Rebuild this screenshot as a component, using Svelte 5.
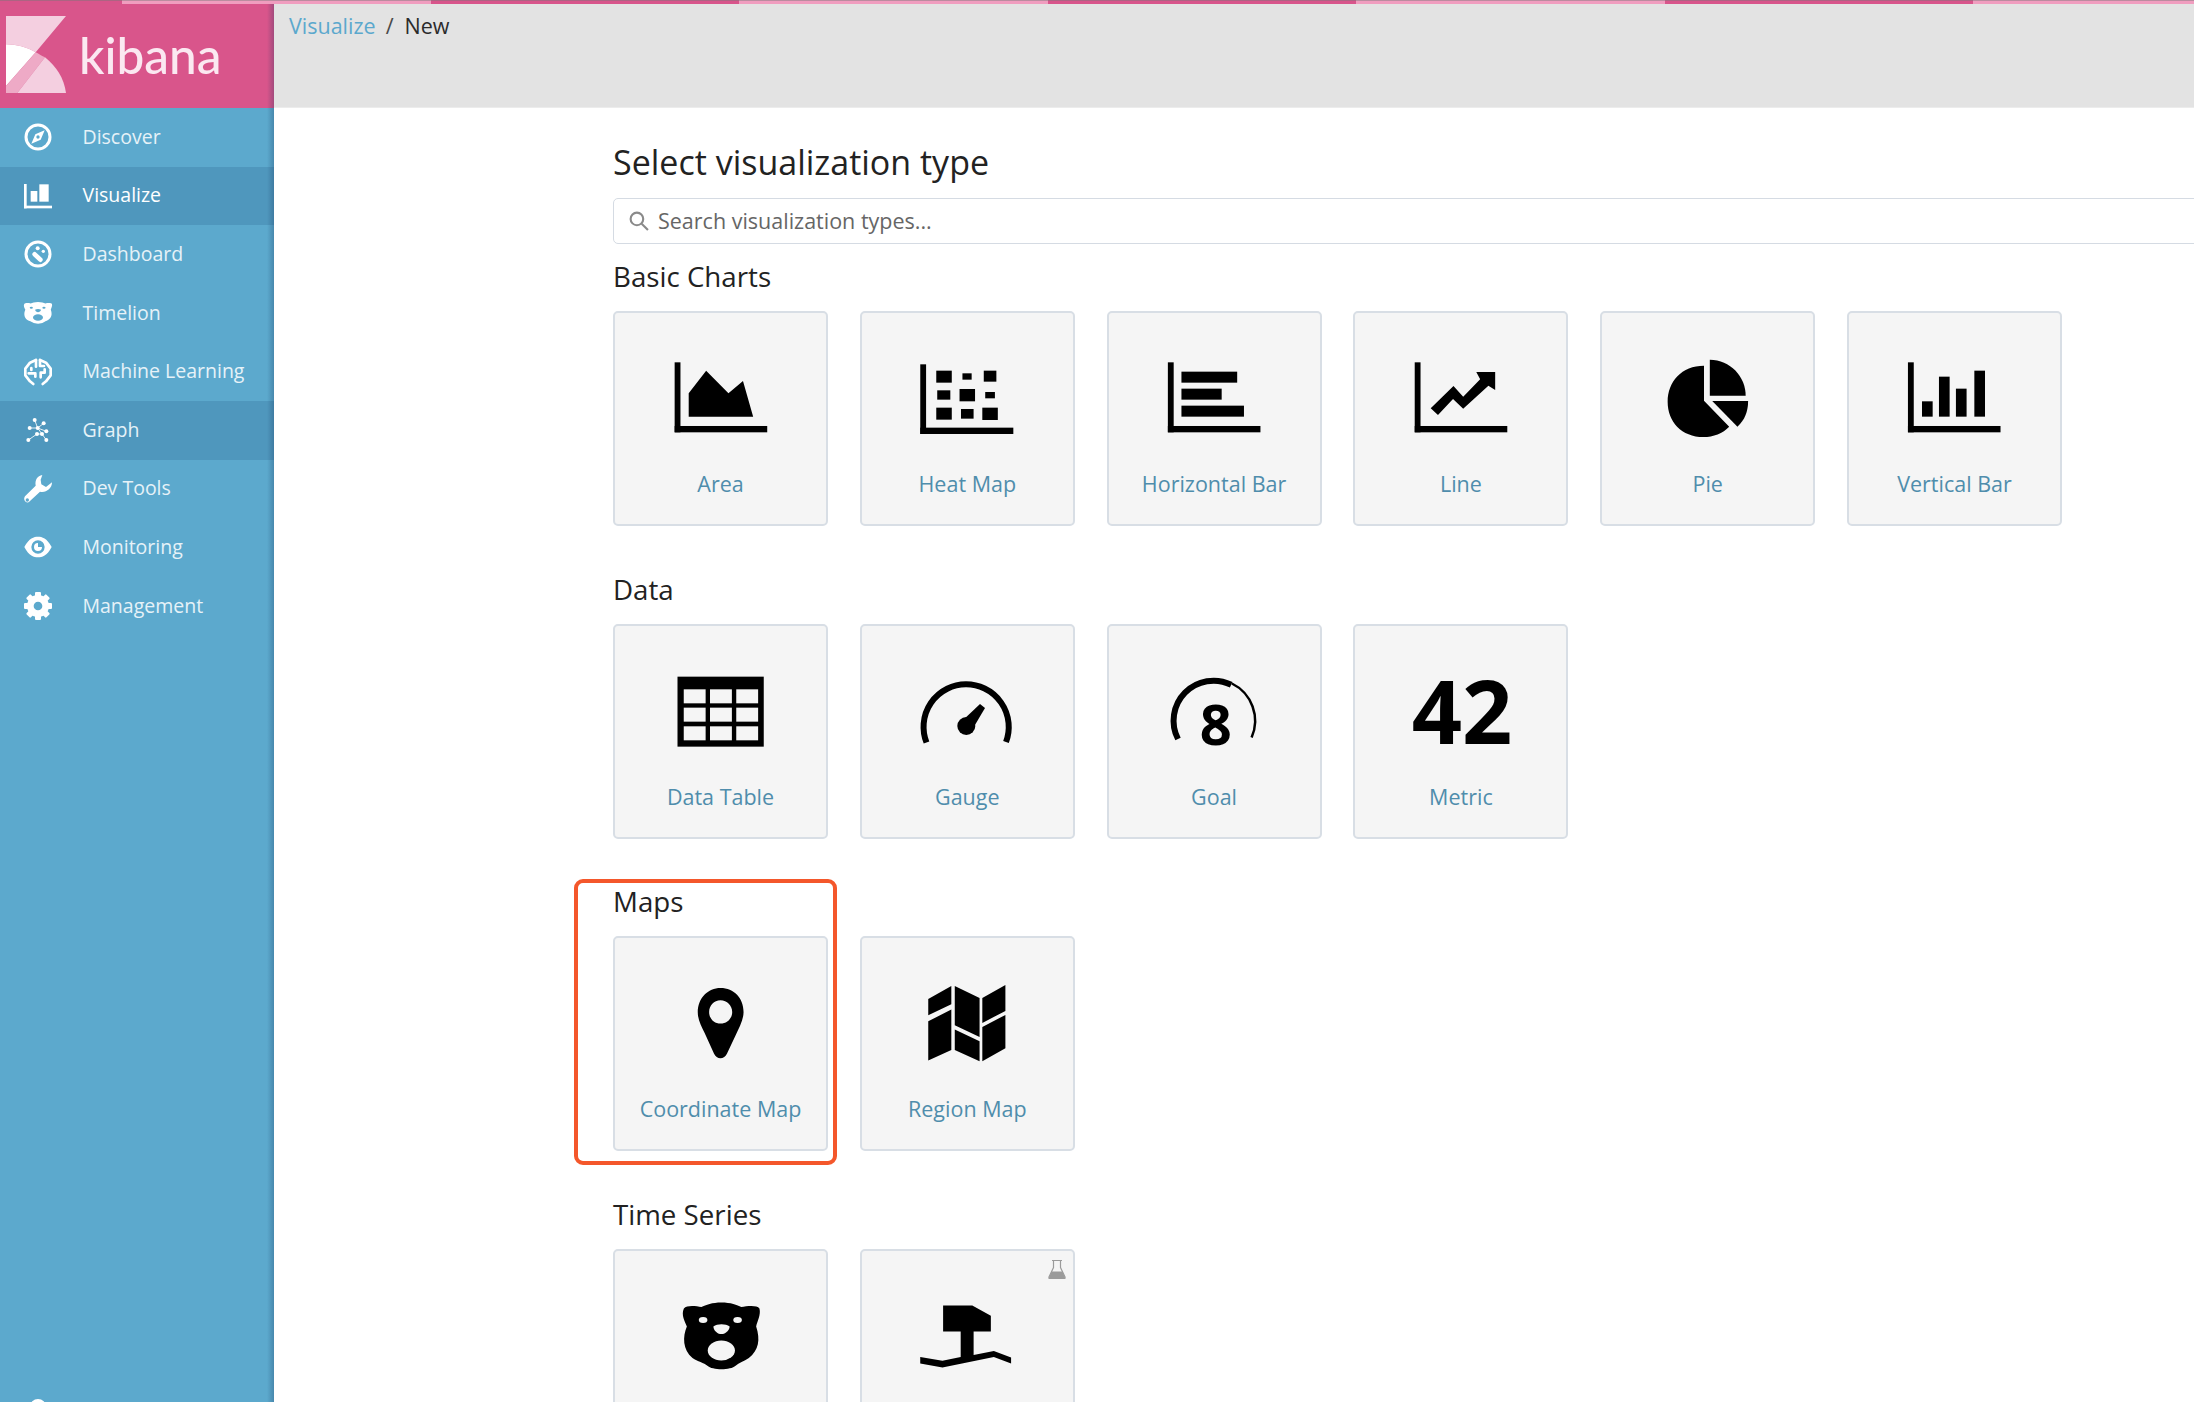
<script>
  const nav = [
    { label: 'Discover', icon: 'discover' },
    { label: 'Visualize', icon: 'visualize', on: true, bright: true },
    { label: 'Dashboard', icon: 'dashboard' },
    { label: 'Timelion', icon: 'timelion' },
    { label: 'Machine Learning', icon: 'ml' },
    { label: 'Graph', icon: 'graph', on: true },
    { label: 'Dev Tools', icon: 'wrench' },
    { label: 'Monitoring', icon: 'eye' },
    { label: 'Management', icon: 'gear' }
  ];
  const teeth = [0, 45, 90, 135, 180, 225, 270, 315];
</script>

{#snippet axes(x1, x2, xEnd, yTop, yBar, yEnd)}
  <rect x={x1} y={yTop} width={x2 - x1} height={yEnd - yTop} />
  <rect x={x1} y={yBar} width={xEnd - x1} height={yEnd - yBar} />
{/snippet}

{#snippet bearShape()}
  <path d="M422 338C450 338 470 345 482 352C500 348 530 345 537 356C542 375 530 395 527 410C540 450 535 480 505 505C490 515 475 520 465 528C450 542 395 542 380 528C370 520 350 515 335 505C305 480 305 440 318 410C312 395 300 375 309 356C318 345 345 348 362 352C375 345 395 338 422 338Z" />
  <ellipse class="hole" cx="367" cy="391" rx="13" ry="9" />
  <ellipse class="hole" cx="471" cy="391" rx="13" ry="9" />
  <path class="hole" d="M398 410C410 401 435 401 447 410C446 424 432 433 422 433C412 433 399 424 398 410Z" />
  <ellipse class="hole" cx="422" cy="482" rx="41" ry="30" />
{/snippet}

{#snippet card(label, icon, beta)}
  <div class="card">
    {#if beta}
      <svg class="flask" viewBox="0 0 18 19" aria-hidden="true">
        <path d="M4 .5H14M5.500 1V7.500L1 17Q.7 18.500 2 18.500H16Q17.300 18.500 17 17L12.500 7.500V1" fill="none" stroke="#9b9b9b" stroke-width="1.200" />
        <path d="M3.500 11.500H14.500L17.500 18.800H.5Z" fill="#9b9b9b" />
      </svg>
    {/if}
    <svg class="viz" viewBox="0 0 100 100" aria-hidden="true">{@render icon()}</svg>
    {#if label}
      <span class="label">{label}</span>
    {/if}
  </div>
{/snippet}

{#snippet area()}
  <g transform="translate(-71 -41) scale(.4847 .3333)">
    {@render axes(154, 166, 345, 187, 378, 397)}
    <path d="M183 280L219 212L265 280L295 243L316 350H183Z" />
  </g>
{/snippet}
{#snippet heat()}
  <g transform="translate(-317.600 -41) scale(.4847 .3333)">
    {@render axes(662, 674, 854, 193, 383, 402)}
    <rect x="695" y="212" width="32" height="36" /><rect x="749" y="220" width="19" height="19" /><rect x="793" y="212" width="26" height="33" />
    <rect x="697" y="271" width="27" height="28" /><rect x="743" y="267" width="32" height="37" /><rect x="796" y="276" width="20" height="19" />
    <rect x="695" y="323" width="32" height="36" /><rect x="746" y="327" width="26" height="29" /><rect x="790" y="323" width="32" height="37" />
  </g>
{/snippet}
{#snippet hbar()}
  <g transform="translate(-564.200 -41) scale(.4847 .3333)">
    {@render axes(1172, 1184, 1363, 187, 378, 397)}
    <rect x="1200" y="215" width="115" height="33" /><rect x="1200" y="266" width="83" height="33" /><rect x="1200" y="317" width="129" height="33" />
  </g>
{/snippet}
{#snippet line()}
  <g transform="translate(-90.800 -41) scale(.4847 .3333)">
    {@render axes(195, 207, 386, 187, 378, 397)}
    <path d="M228 325L275 258L295 290L330 238L322 216H361V270L347 257L295 326L274 297L243 345Z" />
  </g>
{/snippet}
{#snippet pie()}
  <g transform="translate(-337.400 -41) scale(.4847 .3333)">
    <path d="M791 197C745 197 716 245 716 305C716 365 745 411 790 411C810 411 830 400 843 380L791 302Z" />
    <path d="M803 179C845 179 877 230 877 287H803Z" />
    <path d="M808 303H882C882 335 875 360 860 380Z" />
  </g>
{/snippet}
{#snippet vbar()}
  <g transform="translate(-584 -41) scale(.4847 .3333)">
    {@render axes(1213, 1225, 1404, 187, 378, 397)}
    <rect x="1242" y="304" width="22" height="46" /><rect x="1277" y="230" width="22" height="120" /><rect x="1312" y="266" width="22" height="84" /><rect x="1350" y="212" width="22" height="138" />
  </g>
{/snippet}
{#snippet table()}
  <g transform="translate(-71 -34) scale(.625 .3333)">
    <rect x="124" y="170" width="138" height="210" />
    {#each [208, 263, 319] as y}
      {#each [134, 176, 218] as x}
        <rect class="hole" {x} {y} width="35" height="42" />
      {/each}
    {/each}
  </g>
{/snippet}
{#snippet gauge()}
  <path class="stroke" stroke-width="6" d="M9.500 88.500A42.600 42.600 0 1 1 89 88" />
  <circle cx="49.300" cy="72" r="9" />
  <path d="M44 68L63 50L68 54L55 76Z" />
{/snippet}
{#snippet goal()}
  <path class="stroke" stroke-width="6" d="M14 85A40 40 0 0 1 67.200 30.800" />
  <path class="stroke" stroke-width="2.500" d="M67.900 29.500A41.500 41.500 0 0 1 87.600 83.400" />
  <text class="num eight" x="51.700" y="91" text-anchor="middle">8</text>
{/snippet}
{#snippet metric()}
  <text class="num fortytwo" x="51" y="90" text-anchor="middle">42</text>
{/snippet}
{#snippet pin()}
  <g transform="translate(-111 -96.400) scale(.3444 .3333)">
    <path fill-rule="evenodd" d="M466 355C505 355 533 385 533 428C533 450 520 475 510 497L485 552C478 570 455 572 447 552L420 490C410 470 400 450 400 428C400 385 430 355 466 355ZM466 392C447 392 433 408 433 427C433 447 447 462 466 462C485 462 500 447 500 427C500 408 485 392 466 392Z" />
  </g>
{/snippet}
{#snippet region()}
  <g transform="translate(-357.600 -96.400) scale(.3444 .3333)">
    <path d="M1071 388L1138 349V404L1071 437ZM1071 455L1138 420V541L1071 573ZM1148 349L1220 385V502L1148 467ZM1148 480L1220 515V575L1148 541ZM1228 385L1295 346V424L1228 460ZM1228 472L1295 436V536L1228 575Z" />
  </g>
{/snippet}
{#snippet bear()}
  <g transform="translate(-89.600 -89.200) scale(.3316 .3333)">{@render bearShape()}</g>
{/snippet}
{#snippet hammer()}
  <g transform="translate(-336 -89.200) scale(.3316 .3333)">
    <path d="M1092 347H1180L1236 378V425H1184V496L1245 484L1297 503V521L1245 502L1090 533L1023 521V502L1090 513L1145 502V425H1092Z" />
  </g>
{/snippet}

<div class="page">
  <div class="progress"></div>

  <aside class="sidebar">
    <div class="brand">
      <svg class="logo" viewBox="0 0 60 77" aria-hidden="true">
        <path fill="#f4cfe0" d="M0 0H60L29.700 36.300C21 31 10 28.300 0 28.300Z" />
        <path fill="#fff" d="M0 28.300C10 28.300 21 31 29.700 36.300L0 70Z" />
        <path fill="#eeaac6" d="M29.700 36.300C33 38 36 40 39 41.300L11.300 77H0V70Z" />
        <path fill="#f4cfe0" d="M39 41.300C50 50 58 62 60 77H11.300Z" />
      </svg>
      <span class="word">kibana</span>
    </div>
    <nav>
      {#each nav as item}
        <div class="row" class:on={item.on} class:bright={item.bright}>
          <svg class="nav-icon" viewBox="0 0 84 84" aria-hidden="true">
            {#if item.icon === 'discover'}
              <circle class="ring" cx="42" cy="42" r="36" />
              <path fill-rule="evenodd" d="M62 22L50 50L22 62L34 34ZM42 37A5 5 0 1 0 42 47A5 5 0 1 0 42 37Z" />
            {:else if item.icon === 'visualize'}
              <rect x="0" y="6" width="8" height="73" /><rect x="0" y="71" width="84" height="8" />
              <rect x="20" y="27" width="20" height="32" /><rect x="46" y="7" width="28" height="52" />
            {:else if item.icon === 'dashboard'}
              <circle class="ring" cx="42" cy="42" r="36" />
              <circle cx="41" cy="25" r="6" /><circle cx="58" cy="34" r="5" />
              <path class="blob" d="M32 43L49 59" />
            {:else if item.icon === 'timelion'}
              <g transform="translate(42 42) scale(.365 .325) translate(-422 -440)">{@render bearShape()}</g>
            {:else if item.icon === 'ml'}
              <g class="lines">
                <path d="M36 6L18 14L4 32V52L18 70L28 78M48 6L66 14L80 32V52L66 70L56 78" />
                <path d="M36 6V26M48 6V24H60M22 30V36M20 46H34V56M62 34V44H50V58M14 46H20" />
              </g>
            {:else if item.icon === 'graph'}
              <g class="thin">
                <path d="M32 12L41 36M59 22L41 36M17 36H41L54 54L39 54L13 72M41 36L67 46M54 54L67 72" />
              </g>
              {#each [[32,12],[17,36],[59,22],[41,36],[67,46],[39,54],[13,72],[67,72],[54,54]] as p}
                <circle cx={p[0]} cy={p[1]} r="6" />
              {/each}
            {:else if item.icon === 'wrench'}
              <path fill-rule="evenodd" d="M55 0C40 3 32 15 35 32L3 64C-3 72 3 85 14 82L48 50C65 54 84 42 84 22L66 36L52 28L50 14ZM10 70A5 5 0 1 0 10 80A5 5 0 1 0 10 70Z" />
            {:else if item.icon === 'eye'}
              <path fill-rule="evenodd" d="M1 42C15 15 30 11 42 11C54 11 69 15 83 42C69 69 54 73 42 73C30 73 15 69 1 42ZM42 22A20 20 0 1 0 42 62A20 20 0 1 0 42 22Z" />
              <path d="M42 30A12 12 0 1 0 54 42L42 42Z" />
            {:else}
              <circle class="gearbody" cx="42" cy="42" r="23" />
              {#each teeth as t}
                <rect x="33" y="0" width="18" height="20" rx="3" transform="rotate({t} 42 42)" />
              {/each}
            {/if}
          </svg>
          <span class="nav-text">{item.label}</span>
        </div>
      {/each}
    </nav>
    <div class="collapse"></div>
  </aside>

  <main>
    <header class="topbar">
      <a class="crumb" href="#/">Visualize</a><span class="sep">/</span><span class="cur">New</span>
    </header>

    <div class="content">
      <h1>Select visualization type</h1>
      <div class="search">
        <svg viewBox="0 0 20 20" aria-hidden="true"><circle cx="8.500" cy="8.500" r="6" /><path d="M13 13L19 19" /></svg>
        <span>Search visualization types...</span>
      </div>

      <section>
        <h2>Basic Charts</h2>
        <div class="cards">
          {@render card('Area', area)}
          {@render card('Heat Map', heat)}
          {@render card('Horizontal Bar', hbar)}
          {@render card('Line', line)}
          {@render card('Pie', pie)}
          {@render card('Vertical Bar', vbar)}
        </div>
      </section>

      <section>
        <h2>Data</h2>
        <div class="cards">
          {@render card('Data Table', table)}
          {@render card('Gauge', gauge)}
          {@render card('Goal', goal)}
          {@render card('Metric', metric)}
        </div>
      </section>

      <section class="maps">
        <div class="callout"></div>
        <h2>Maps</h2>
        <div class="cards">
          {@render card('Coordinate Map', pin)}
          {@render card('Region Map', region)}
        </div>
      </section>

      <section>
        <h2>Time Series</h2>
        <div class="cards">
          {@render card('', bear)}
          {@render card('', hammer, true)}
        </div>
      </section>
    </div>
  </main>
</div>

<style>
  :global(body) {
    margin: 0;
    background: #fff;
    font-family: "Open Sans", "Liberation Sans", sans-serif;
  }
  .page {
    position: relative;
    display: flex;
    width: 2194px;
    height: 1402px;
    overflow: hidden;
  }
  .progress {
    position: absolute;
    z-index: 3;
    top: 0;
    left: 0;
    right: 0;
    height: 4px;
    background: repeating-linear-gradient(90deg, #d8558b 0 308.500px, #f09dbf 308.500px 617px);
    background-position: 431px 0;
    background-size: 617px 100%;
    border-top: 1px solid rgba(120, 120, 120, .45);
    box-sizing: border-box;
  }
  .sidebar {
    position: relative;
    flex: 0 0 274px;
    background: #5ca9cd;
    overflow: hidden;
  }
  .sidebar::after {
    content: "";
    position: absolute;
    top: 0;
    bottom: 0;
    right: 0;
    width: 7px;
    background: linear-gradient(90deg, rgba(20, 50, 90, 0), rgba(20, 50, 90, .28));
  }
  .brand {
    height: 108px;
    box-sizing: border-box;
    padding: 16px 0 0 6px;
    background: #d9558b;
    display: flex;
    align-items: flex-start;
  }
  .logo {
    width: 60px;
    height: 77px;
    flex: none;
  }
  .word {
    margin: 12px 0 0 13px;
    font: 500 49.500px/1.1 Lato, "Open Sans", sans-serif;
    color: #fbe8f1;
  }
  .row {
    height: 58.600px;
    display: flex;
    align-items: center;
    font-size: 19.500px;
    color: #e6f2f8;
  }
  .nav-text {
    padding-bottom: 2px;
  }
  .row.on {
    background: #4f97bd;
  }
  .row.bright {
    color: #fff;
  }
  .nav-icon {
    width: 28px;
    height: 28px;
    margin: 0 30.500px 0 24px;
    flex: none;
    fill: #fff;
    overflow: visible;
    --hole: #5ca9cd;
  }
  .ring {
    fill: none;
    stroke: #fff;
    stroke-width: 9;
  }
  .blob {
    fill: none;
    stroke: #fff;
    stroke-width: 14;
    stroke-linecap: round;
  }
  .gearbody {
    fill: none;
    stroke: #fff;
    stroke-width: 20;
  }
  .lines path {
    fill: none;
    stroke: #fff;
    stroke-width: 8;
    stroke-linecap: round;
    stroke-linejoin: round;
  }
  .thin path {
    fill: none;
    stroke: #fff;
    stroke-width: 2.500;
  }
  .hole {
    fill: var(--hole, #f5f5f5);
  }
  .collapse {
    position: absolute;
    left: 30px;
    top: 1399px;
    width: 16px;
    height: 16px;
    border-radius: 50%;
    background: #fff;
  }
  main {
    flex: 1;
    min-width: 0;
  }
  .topbar {
    height: 108px;
    box-sizing: border-box;
    padding: 11px 0 0 15px;
    background: #e3e3e3;
    border-bottom: 1px solid #ececec;
    font-size: 21.500px;
    line-height: 30px;
    color: #2b2b2b;
  }
  .crumb {
    color: #5ba8cd;
    text-decoration: none;
  }
  .sep {
    margin: 0 11px 0 10px;
    color: #4a4a4a;
  }
  .content {
    padding: 32px 0 0 339px;
    color: #222;
  }
  h1 {
    margin: 0 0 13px;
    font-size: 34px;
    font-weight: 400;
    line-height: 45px;
  }
  .search {
    height: 46px;
    margin: 0 -12px 15px 0;
    box-sizing: border-box;
    border: 1.500px solid #d5dbe3;
    border-radius: 5px;
    display: flex;
    align-items: center;
    padding: 0 0 2px 14px;
    font-size: 21.500px;
    color: #666;
  }
  .search svg {
    width: 21px;
    height: 21px;
    margin-right: 9px;
    fill: none;
    stroke: #8a8a8a;
    stroke-width: 2;
  }
  section {
    position: relative;
    margin-bottom: 45.700px;
  }
  h2 {
    margin: 0 0 17px;
    font-size: 27.700px;
    font-weight: 400;
    line-height: 35px;
  }
  .cards {
    display: flex;
    gap: 31.800px;
  }
  .card {
    position: relative;
    width: 215px;
    height: 215px;
    flex: none;
    box-sizing: border-box;
    padding-top: 28px;
    background: #f5f5f5;
    border: 2px solid #d8dee5;
    border-radius: 5px;
    display: flex;
    flex-direction: column;
    align-items: center;
  }
  .viz {
    width: 100px;
    height: 100px;
    flex: none;
    fill: #000;
    overflow: visible;
  }
  .stroke {
    fill: none;
    stroke: #000;
  }
  .num {
    font-family: "Open Sans", sans-serif;
    font-weight: 700;
  }
  .eight {
    font-size: 56px;
  }
  .fortytwo {
    font-size: 88px;
  }
  .label {
    margin-top: 28px;
    font-size: 21.500px;
    line-height: 30px;
    color: #4f8dac;
  }
  .flask {
    position: absolute;
    top: 9px;
    right: 7px;
    width: 18px;
    height: 19px;
  }
  .callout {
    position: absolute;
    z-index: 2;
    left: -39px;
    top: -5px;
    width: 263px;
    height: 286px;
    box-sizing: border-box;
    border: 4px solid #f4572b;
    border-radius: 9px;
    pointer-events: none;
  }
</style>
